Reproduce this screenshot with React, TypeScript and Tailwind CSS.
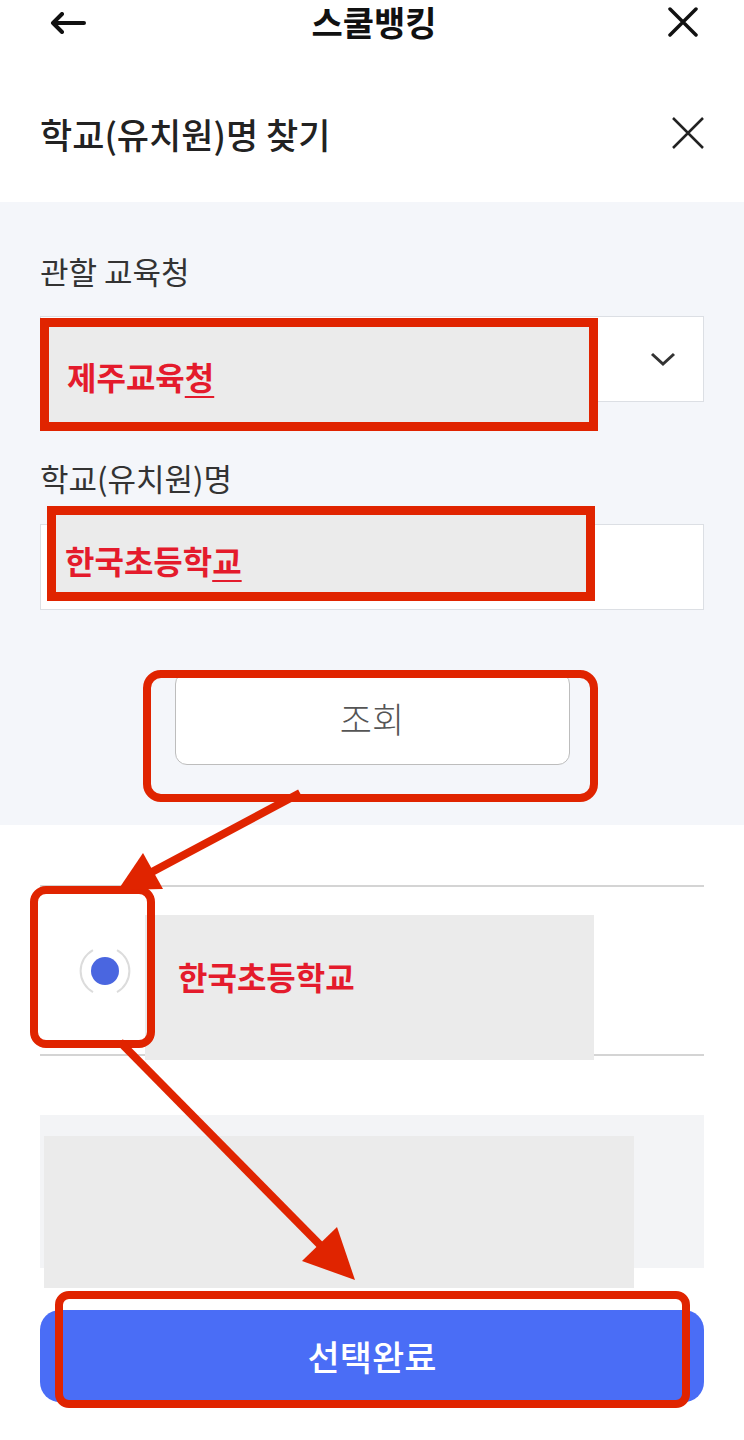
import type { ReactNode } from "react";

const FONT = { fontFamily: '"Noto Sans CJK KR", "Noto Sans", sans-serif' };

// red annotation frame drawn over the screenshot
function Frame({ className, children }: { className: string; children?: ReactNode }) {
  return <div className={`absolute border-[#e02400] ${className}`}>{children}</div>;
}

function RedText({ text, underlineLast = false }: { text: string; underlineLast?: boolean }) {
  const head = underlineLast ? text.slice(0, -1) : text;
  const last = underlineLast ? text.slice(-1) : "";
  return (
    <span className="text-[32px] font-bold leading-none text-[#e41b2c]">
      {head}
      {last && <span className="underline decoration-2 underline-offset-[6px]">{last}</span>}
    </span>
  );
}

function Radio() {
  return (
    <svg width="56" height="56" viewBox="0 0 56 56">
      <path d="M16 7 A24 24 0 0 0 16 49" fill="none" stroke="#dcdcdc" strokeWidth="2" />
      <path d="M40 7 A24 24 0 0 1 40 49" fill="none" stroke="#dcdcdc" strokeWidth="2" />
      <circle cx="28" cy="28" r="14" fill="#4a66e0" />
    </svg>
  );
}

export default function App() {
  return (
    <div className="relative h-[1440px] w-[744px] overflow-hidden bg-white" style={FONT}>
      {/* top bar */}
      <div className="grid h-[44px] grid-cols-[1fr_auto_1fr] items-center pl-[50px] pr-[46px]">
        <svg width="36" height="22" viewBox="0 0 36 22" className="mt-[1px]">
          <path d="M3 11 H34 M12 2 L3 11 L12 20" fill="none" stroke="#111" strokeWidth="4" strokeLinecap="round" strokeLinejoin="round" />
        </svg>
        <span className="text-[34px] font-bold leading-[44px] text-[#111]">스쿨뱅킹</span>
        <svg width="30" height="30" viewBox="0 0 30 30" className="justify-self-end">
          <path d="M2 2 L28 28 M28 2 L2 28" stroke="#111" strokeWidth="3.5" strokeLinecap="round" />
        </svg>
      </div>

      {/* sheet title */}
      <div className="flex h-[158px] items-center justify-between pl-[40px] pr-[40px] pt-[20px]">
        <span className="text-[35px] font-medium leading-none text-[#222]">학교(유치원)명 찾기</span>
        <svg width="32" height="32" viewBox="0 0 32 32">
          <path d="M1 1 L31 31 M31 1 L1 31" stroke="#222" strokeWidth="2.5" />
        </svg>
      </div>

      {/* search form */}
      <div className="flex h-[623px] flex-col bg-[#f4f6fa] px-[40px] pt-[48px]">
        <div className="h-[42px] text-[31px] leading-[42px] text-[#333]">관할 교육청</div>
        <div className="mt-[24px] flex h-[86px] items-center justify-end border border-[#dcdfe4] bg-white pr-[27px]">
          <svg width="26" height="16" viewBox="0 0 26 16">
            <path d="M2 3 L13 13 L24 3" fill="none" stroke="#333" strokeWidth="3" />
          </svg>
        </div>
        <div className="mt-[55px] h-[42px] text-[31px] leading-[42px] text-[#333]">학교(유치원)명</div>
        <div className="mt-[25px] h-[86px] border border-[#dcdfe4] bg-white" />
        <button className="mx-auto mt-[62px] flex h-[93px] w-[395px] items-center justify-center rounded-[12px] border border-[#bdbdbd] bg-white text-[35px] font-light text-[#555]">
          조회
        </button>
      </div>

      {/* result list */}
      <div className="mx-[40px] mt-[60px] flex h-[171px] items-center border-y-2 border-[#d4d4d4] pl-[37px]">
        <Radio />
      </div>

      <div className="mx-[40px] mt-[59px] h-[153px] bg-[#f3f4f6]" />

      <button className="mx-[40px] mt-[42px] flex h-[92px] w-[664px] items-center justify-center rounded-[20px] bg-[#4a6df6] text-[35px] font-medium text-white">
        선택완료
      </button>

      {/* annotation overlays */}
      <Frame className="left-[40px] top-[318px] flex h-[113px] w-[558px] items-center border-[9px] bg-[#ebebeb] pl-[18px] pt-[2px]">
        <RedText text="제주교육청" underlineLast />
      </Frame>
      <Frame className="left-[47px] top-[506px] flex h-[95px] w-[548px] items-center border-[9px] bg-[#ebebeb] pl-[9px] pt-[12px]">
        <RedText text="한국초등학교" underlineLast />
      </Frame>
      <Frame className="left-[143px] top-[670px] h-[132px] w-[455px] rounded-[18px] border-[8px]" />

      <div className="absolute left-[145px] top-[915px] flex h-[145px] w-[449px] items-center bg-[#ebebeb] pb-[24px] pl-[33px]">
        <RedText text="한국초등학교" />
      </div>
      <Frame className="left-[30px] top-[886px] h-[162px] w-[125px] rounded-[16px] border-[8px]" />

      <div className="absolute left-[44px] top-[1136px] h-[152px] w-[590px] bg-[#ebebeb]" />
      <Frame className="left-[55px] top-[1291px] h-[117px] w-[635px] rounded-[14px] border-[8px]" />

      <svg className="pointer-events-none absolute left-0 top-0" width="744" height="1440" viewBox="0 0 744 1440">
        <line x1="300" y1="793" x2="150" y2="873" stroke="#e02400" strokeWidth="8" />
        <polygon points="118,890 143,853 163,889" fill="#e02400" />
        <line x1="120" y1="1042" x2="325" y2="1250" stroke="#e02400" strokeWidth="8" />
        <polygon points="355,1280 302,1261 337,1227" fill="#e02400" />
      </svg>
    </div>
  );
}
